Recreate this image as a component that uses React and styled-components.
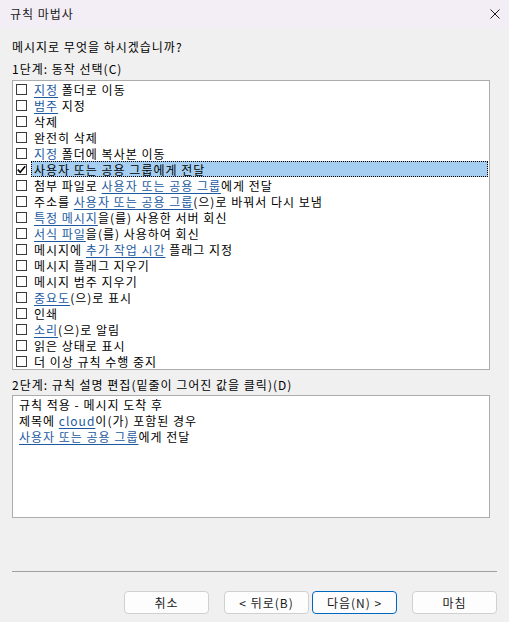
import React from "react";
import styled, { createGlobalStyle, css } from "styled-components";

const GlobalStyle = createGlobalStyle`
  html, body {
    margin: 0;
    padding: 0;
    background: #f0f0f0;
  }
  body {
    font-family: "Noto Sans CJK KR", "Noto Sans", sans-serif;
    font-size: 12px;
    letter-spacing: 1px;
    color: #000;
  }
  * { box-sizing: border-box; }
`;

const Window = styled.div`
  width: 509px;
  height: 622px;
  background: #f0f0f0;
  display: flex;
  flex-direction: column;
  overflow: hidden;
`;

const TitleBar = styled.div`
  height: 28px;
  flex: none;
  background: #f3eef6;
  display: flex;
  align-items: center;
  justify-content: space-between;
  padding: 0 9px 0 10px;
`;

const Title = styled.span`
  font-size: 12px;
  line-height: 16px;
  color: #1a1a1a;
`;

const CloseButton = styled.div`
  width: 10px;
  height: 10px;
  display: flex;
  margin-top: -1px;
`;

const Content = styled.div`
  flex: 1;
  display: flex;
  flex-direction: column;
  padding: 11px 13px 0 12px;
`;

const Label = styled.div`
  line-height: 16px;
  height: 16px;
  white-space: nowrap;
  margin-top: ${(p) => p.$mt || 0}px;
`;

const ListBox = styled.div`
  margin-top: 3px;
  width: 478px;
  height: 290px;
  background: #fff;
  border: 1px solid #acacac;
  display: flex;
  flex-direction: column;
  padding-left: 3px;
`;

const Row = styled.div`
  height: 16px;
  display: flex;
  align-items: center;
  flex: none;
`;

const CheckBox = styled.div`
  width: 11px;
  height: 11px;
  border: 1px solid #3a3a3a;
  background: #fff;
  flex: none;
  display: flex;
  align-items: center;
  justify-content: center;
`;

const ItemLabel = styled.div`
  flex: 1;
  height: 16px;
  line-height: 15px;
  margin-left: 4px;
  margin-right: 1px;
  padding-left: 2px;
  white-space: nowrap;
  border: 1px solid transparent;
  ${(p) =>
    p.$selected &&
    css`
      background: #a5cef0;
      border: 1px dotted #000;
    `}
  display: flex;
  align-items: center;
`;

const Link = styled.span`
  color: #1c5aa0;
  text-decoration: underline;
  text-underline-offset: 2px;
  text-decoration-thickness: 1px;
`;

const DescBox = styled.div`
  margin-top: 2px;
  width: 478px;
  height: 123px;
  background: #fff;
  border: 1px solid #acacac;
  padding: 1px 6px;
  display: flex;
  flex-direction: column;
`;

const DescLine = styled.div`
  line-height: 16px;
  height: 16px;
  white-space: nowrap;
`;

const Separator = styled.div`
  margin-top: 53px;
  height: 1px;
  background: #a0a0a0;
  width: 485px;
`;

const ButtonRow = styled.div`
  margin-top: 19px;
  display: flex;
  justify-content: flex-end;
  margin-right: -1px;
`;

const Button = styled.button`
  width: 85px;
  height: 23px;
  margin-left: ${(p) => p.$gap || 0}px;
  background: #fdfdfd;
  border: 1px solid ${(p) => (p.$primary ? "#0067c0" : "#d0d0d0")};
  border-radius: 4px;
  font-family: "Noto Sans CJK KR", "Noto Sans", sans-serif;
  font-size: 12px;
  letter-spacing: 1px;
  color: #1a1a1a;
  padding: 0;
  line-height: 16px;
  display: flex;
  align-items: center;
  justify-content: center;
`;

const items = [
  [["지정", 1], [" 폴더로 이동"]],
  [["범주", 1], [" 지정"]],
  [["삭제"]],
  [["완전히 삭제"]],
  [["지정", 1], [" 폴더에 복사본 이동"]],
  [["사용자 또는 공용 그룹에게 전달"]],
  [["첨부 파일로 "], ["사용자 또는 공용 그룹", 1], ["에게 전달"]],
  [["주소를 "], ["사용자 또는 공용 그룹", 1], ["(으)로 바꿔서 다시 보냄"]],
  [["특정 메시지", 1], ["을(를) 사용한 서버 회신"]],
  [["서식 파일", 1], ["을(를) 사용하여 회신"]],
  [["메시지에 "], ["추가 작업 시간", 1], [" 플래그 지정"]],
  [["메시지 플래그 지우기"]],
  [["메시지 범주 지우기"]],
  [["중요도", 1], ["(으)로 표시"]],
  [["인쇄"]],
  [["소리", 1], ["(으)로 알림"]],
  [["읽은 상태로 표시"]],
  [["더 이상 규칙 수행 중지"]],
];

const desc = [
  [["규칙 적용 - 메시지 도착 후"]],
  [["제목에 "], ["cloud", 1], ["이(가) 포함된 경우"]],
  [["사용자 또는 공용 그룹", 1], ["에게 전달"]],
];

const renderSegs = (segs) =>
  segs.map(([t, link], i) =>
    link ? (
      <Link key={i}>{t}</Link>
    ) : (
      <span key={i} style={{ whiteSpace: "pre" }}>
        {t}
      </span>
    )
  );

const CheckMark = () => (
  <svg width="9" height="9" viewBox="0 0 9 9">
    <polyline
      points="0.8,4.6 3.2,7.2 8.2,1.2"
      fill="none"
      stroke="#000"
      strokeWidth="1.6"
    />
  </svg>
);

export default function App() {
  return (
    <>
      <GlobalStyle />
      <Window>
        <TitleBar>
          <Title>규칙 마법사</Title>
          <CloseButton>
            <svg width="10" height="10" viewBox="0 0 10 10">
              <path d="M0.5 0.5 L9.5 9.5 M9.5 0.5 L0.5 9.5" stroke="#1a1a1a" strokeWidth="1" />
            </svg>
          </CloseButton>
        </TitleBar>
        <Content>
          <Label>메시지로 무엇을 하시겠습니까?</Label>
          <Label $mt={6}>1단계: 동작 선택(C)</Label>
          <ListBox>
            {items.map((segs, i) => (
              <Row key={i}>
                <CheckBox>{i === 5 && <CheckMark />}</CheckBox>
                <ItemLabel $selected={i === 5}>{renderSegs(segs)}</ItemLabel>
              </Row>
            ))}
          </ListBox>
          <Label $mt={7}>2단계: 규칙 설명 편집(밑줄이 그어진 값을 클릭)(D)</Label>
          <DescBox>
            {desc.map((segs, i) => (
              <DescLine key={i}>{renderSegs(segs)}</DescLine>
            ))}
          </DescBox>
          <Separator />
          <ButtonRow>
            <Button>취소</Button>
            <Button $gap={15}>&lt; 뒤로(B)</Button>
            <Button $gap={3} $primary>
              다음(N) &gt;
            </Button>
            <Button $gap={15}>마침</Button>
          </ButtonRow>
        </Content>
      </Window>
    </>
  );
}
